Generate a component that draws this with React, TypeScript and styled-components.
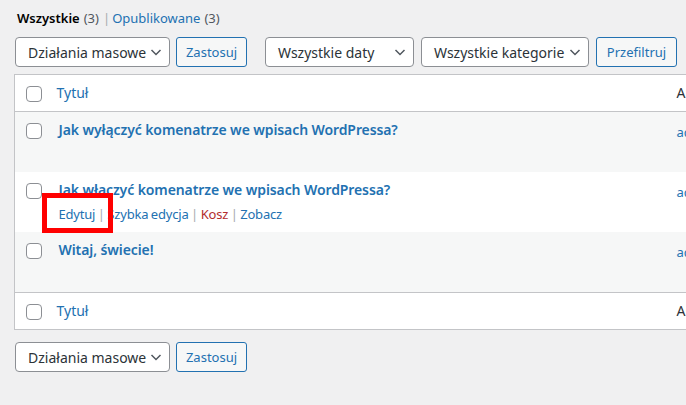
import styled, {createGlobalStyle} from "styled-components";

const GlobalStyle = createGlobalStyle`
  body {
    margin: 0;
    background: #f0f0f1;
    font-family: "Noto Sans", "Open Sans", sans-serif;
    color: #3c434a;
  }
`

const Page = styled.div`
  position: relative;
  width: 686px;
  height: 405px;
  overflow: hidden;
  padding-left: 14px;
  box-sizing: border-box;
`

const SubNav = styled.ul`
  display: flex;
  margin: 8px 0 0;
  padding: 0 0 0 3px;
  list-style: none;
  font-size: 13px;
  line-height: 20px;
  color: #50575e;

  li + li::before {
    content: "|";
    color: #a7aaad;
    margin: 0 2px 0 4px;
  }
`

const NavLink = styled.a<{ $current?: boolean }>`
  color: ${p => p.$current ? "#000" : "#2271b1"};
  font-weight: ${p => p.$current ? 600 : 400};
  text-decoration: none;
`

const Count = styled.span`
  margin-left: 4px;
  color: #50575e;
`

const TableNav = styled.div<{ $top?: boolean }>`
  display: flex;
  align-items: center;
  gap: 6px;
  height: 30px;
  margin: ${p => p.$top ? "9px 0 7px 1px" : "12px 0 0 1px"};
`

const Group = styled.div`
  display: flex;
  gap: 7px;
  margin-left: 12px;
`

const Select = styled.div<{ $width: number }>`
  display: flex;
  align-items: center;
  justify-content: space-between;
  box-sizing: border-box;
  width: ${p => p.$width}px;
  height: 30px;
  padding: 0 7px 0 12px;
  border: 1px solid #8c8f94;
  border-radius: 4px;
  background: #fff;
  color: #2c3338;
  font-size: 14px;
  white-space: nowrap;

  svg {
    flex: none;
  }
`

const Button = styled.button<{ $width: number }>`
  box-sizing: border-box;
  width: ${p => p.$width}px;
  height: 30px;
  padding: 0;
  border: 1px solid #2271b1;
  border-radius: 3px;
  background: #f6f7f7;
  color: #2271b1;
  font-family: inherit;
  font-size: 13px;
`

const Table = styled.table`
  width: 900px;
  border-collapse: collapse;
  border: 1px solid #c3c4c7;
  background: #fff;
  table-layout: fixed;

  td, th {
    padding: 8px 10px;
    text-align: left;
    vertical-align: top;
    font-weight: 400;
  }
`

const HeadRow = styled.tr<{ $foot?: boolean }>`
  border-${p => p.$foot ? "top" : "bottom"}: 1px solid #c3c4c7;

  th {
    line-height: 20px;
    font-size: 14px;
    color: #2c3338;
  }
`

const Row = styled.tr<{ $alt?: boolean }>`
  background: ${p => p.$alt ? "#f6f7f7" : "#fff"};
  height: 60px;
`

const CheckCell = styled.td`
  && {
    padding: 11px 0 0 11px;
  }
`

const TitleCell = styled.td`
  && {
    padding-left: 12px;
  }
`

const Checkbox = styled.span`
  display: block;
  width: 16px;
  height: 16px;
  box-sizing: border-box;
  border: 1px solid #8c8f94;
  border-radius: 4px;
  background: #fff;
`

const SortLink = styled.a`
  color: #2271b1;
  text-decoration: none;
`

const Title = styled.a`
  display: block;
  color: #2271b1;
  font-size: 14px;
  font-weight: 600;
  line-height: 20px;
  letter-spacing: -0.1px;
  text-decoration: none;
  white-space: nowrap;
`

const Actions = styled.div<{ $visible?: boolean }>`
  visibility: ${p => p.$visible ? "visible" : "hidden"};
  margin-top: 4px;
  font-size: 13px;
  line-height: 20px;
  letter-spacing: -0.2px;
  word-spacing: -0.6px;
  color: #a7aaad;
  white-space: nowrap;
`

const Action = styled.a<{ $danger?: boolean }>`
  color: ${p => p.$danger ? "#b32d2e" : "#2271b1"};
  text-decoration: none;
`

const Author = styled.a`
  color: #2271b1;
  font-size: 13px;
  line-height: 20px;
  text-decoration: none;
`

const Highlight = styled.div`
  position: absolute;
  left: 42px;
  top: 193px;
  width: 71px;
  height: 40px;
  box-sizing: border-box;
  border: 5px solid #ff0000;
  pointer-events: none;
`

const Chevron = () => (
    <svg width="12" height="12" viewBox="0 0 12 12">
        <polyline points="1.5,4 6,8.5 10.5,4" fill="none" stroke="#50575e" strokeWidth="1.5"/>
    </svg>
)

const posts = [
    {title: "Jak wyłączyć komenatrze we wpisach WordPressa?"},
    {title: "Jak włączyć komenatrze we wpisach WordPressa?", hover: true},
    {title: "Witaj, świecie!"},
]

const BulkActions = () => (
    <>
        <Select $width={155}>Działania masowe<Chevron/></Select>
        <Button $width={71}>Zastosuj</Button>
    </>
)

const Header = ({foot}: { foot?: boolean }) => (
    <HeadRow $foot={foot}>
        <CheckCell as="th"><Checkbox/></CheckCell>
        <th><SortLink href="#">Tytuł</SortLink></th>
        <th>Autor</th>
    </HeadRow>
)

export default function App() {
    return (
        <Page>
            <GlobalStyle/>
            <SubNav>
                <li><NavLink $current href="#">Wszystkie</NavLink><Count>(3)</Count></li>
                <li><NavLink href="#">Opublikowane</NavLink><Count>(3)</Count></li>
            </SubNav>
            <TableNav $top>
                <BulkActions/>
                <Group>
                    <Select $width={149}>Wszystkie daty<Chevron/></Select>
                    <Select $width={168}>Wszystkie kategorie<Chevron/></Select>
                    <Button $width={81}>Przefiltruj</Button>
                </Group>
            </TableNav>
            <Table>
                <colgroup>
                    <col style={{width: 32}}/>
                    <col style={{width: 620}}/>
                    <col/>
                </colgroup>
                <thead><Header/></thead>
                <tbody>
                {posts.map((post, i) => (
                    <Row key={i} $alt={i % 2 === 0}>
                        <CheckCell><Checkbox/></CheckCell>
                        <TitleCell>
                            <Title href="#">{post.title}</Title>
                            <Actions $visible={post.hover}>
                                <Action href="#">Edytuj</Action> | <Action href="#">Szybka edycja</Action> | <Action
                                $danger href="#">Kosz</Action> | <Action href="#">Zobacz</Action>
                            </Actions>
                        </TitleCell>
                        <td><Author href="#">admin</Author></td>
                    </Row>
                ))}
                </tbody>
                <tfoot><Header foot/></tfoot>
            </Table>
            <TableNav>
                <BulkActions/>
            </TableNav>
            <Highlight/>
        </Page>
    )
}
